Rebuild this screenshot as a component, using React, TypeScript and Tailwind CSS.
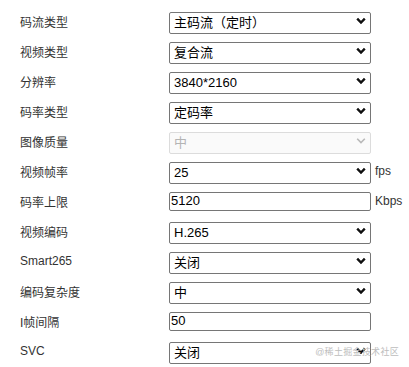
import React from 'react';

type Row = {
    label: string;
    kind: 'select' | 'input';
    value: string;
    disabled?: boolean;
    suffix?: string;
    latin?: boolean;
};

const rows: Row[] = [
    { label: '码流类型', kind: 'select', value: '主码流（定时）' },
    { label: '视频类型', kind: 'select', value: '复合流' },
    { label: '分辨率', kind: 'select', value: '3840*2160' },
    { label: '码率类型', kind: 'select', value: '定码率' },
    { label: '图像质量', kind: 'select', value: '中', disabled: true },
    { label: '视频帧率', kind: 'select', value: '25', suffix: 'fps' },
    { label: '码率上限', kind: 'input', value: '5120', suffix: 'Kbps' },
    { label: '视频编码', kind: 'select', value: 'H.265' },
    { label: 'Smart265', kind: 'select', value: '关闭', latin: true },
    { label: '编码复杂度', kind: 'select', value: '中' },
    { label: 'I帧间隔', kind: 'input', value: '50' },
    { label: 'SVC', kind: 'select', value: '关闭', latin: true },
];

const Chevron: React.FC<{ disabled?: boolean }> = ({ disabled }) => (
    <svg
        className="pointer-events-none absolute right-[5px] top-1/2 -translate-y-1/2"
        width="10"
        height="7"
        viewBox="0 0 10 7"
    >
        <path
            d="M1.2 1.2 L5 5 L8.8 1.2"
            fill="none"
            stroke={disabled ? '#b9b9b9' : '#111'}
            strokeWidth={disabled ? 1.6 : 2.4}
        />
    </svg>
);

const App: React.FC = () => {
    return (
        <div
            className="relative w-[409px] h-[367px] bg-white pt-[6px] overflow-hidden"
            style={{ fontFamily: '"Liberation Sans", "Noto Sans CJK SC", sans-serif' }}
        >
            {rows.map((row, i) => (
                <div key={i} className="flex items-center h-[30px]">
                    <div className="w-[169px] pl-[20px] text-[12px] text-[#333]">
                        <span className={row.latin ? 'inline-block' : 'inline-block translate-y-[2px]'}>{row.label}</span>
                    </div>
                    {row.kind === 'select' ? (
                        <div className="relative w-[202px] h-[22px]">
                            <select
                                disabled={row.disabled}
                                defaultValue={row.value}
                                className={
                                    row.disabled
                                        ? 'appearance-none w-full h-full border border-[#dcdcdc] rounded-[2px] bg-[#fafafa] pl-[4px] text-[13px] text-[#b4b4b4] outline-none'
                                        : 'appearance-none w-full h-full border border-[#767676] rounded-[2px] bg-white pl-[4px] text-[13px] text-black outline-none'
                                }
                            >
                                <option>{row.value}</option>
                            </select>
                            <Chevron disabled={row.disabled} />
                        </div>
                    ) : (
                        <input
                            defaultValue={row.value}
                            className="w-[202px] h-[19px] border border-[#767676] rounded-[2px] pl-[1px] text-[13px] text-black outline-none"
                        />
                    )}
                    {row.suffix && <span className="ml-[4px] text-[12px] text-[#333]">{row.suffix}</span>}
                </div>
            ))}
            <div className="absolute right-[10px] top-[346px] text-[9px] text-[#bdbdbd] tracking-[0.3px]">
                @稀土掘金技术社区
            </div>
        </div>
    );
};

export default App;
